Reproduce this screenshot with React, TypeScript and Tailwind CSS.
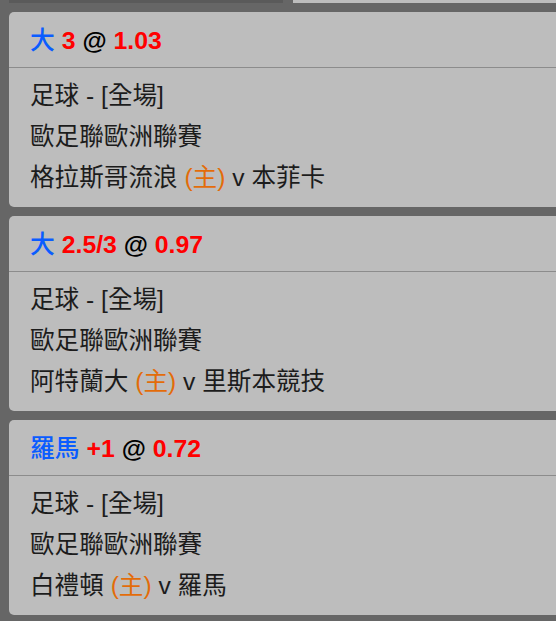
import React from "react";

interface Bet {
    pick: string;
    line: string;
    odds: string;
    home: string;
    away: string;
}

const bets: Bet[] = [
    { pick: "大", line: "3", odds: "1.03", home: "格拉斯哥流浪", away: "本菲卡" },
    { pick: "大", line: "2.5/3", odds: "0.97", home: "阿特蘭大", away: "里斯本競技" },
    { pick: "羅馬", line: "+1", odds: "0.72", home: "白禮頓", away: "羅馬" },
];

const font = {
    fontFamily: "'Liberation Sans', 'Noto Sans CJK TC', sans-serif",
};

function BetCard({ bet }: { bet: Bet }) {
    return (
        <div className="bg-[#bdbdbd] rounded-l-[5px]">
            {/* Header */}
            <div className="h-[56px] flex items-center pl-[21px] pt-[2px] border-b border-[#8c8c8c] text-[24.8px] font-bold">
                <span className="text-[#0a5cff] font-medium">{bet.pick}</span>
                <span className="text-[#ff0000]">&nbsp;{bet.line}</span>
                <span className="text-black">&nbsp;@&nbsp;</span>
                <span className="text-[#ff0000]">{bet.odds}</span>
            </div>
            {/* Match info */}
            <div className="pl-[21px] pt-[7px] pb-[9px] text-[24.6px] leading-[41px] text-[#1c1c1c]">
                <div>足球 - [全場]</div>
                <div>歐足聯歐洲聯賽</div>
                <div>
                    {bet.home} <span className="text-[#e36c09]">(主)</span> v {bet.away}
                </div>
            </div>
        </div>
    );
}

export default function App() {
    return (
        <div className="min-h-screen bg-[#666666] overflow-hidden" style={font}>
            {/* Top strip */}
            <div className="flex h-[3px]">
                <div className="w-[9px]" />
                <div className="w-[274px] bg-[#5a5a5a]" />
                <div className="w-[10px]" />
                <div className="flex-1 bg-[#bdbdbd]" />
            </div>
            <div className="flex flex-col gap-[9px] pt-[9px] pl-[9px]">
                {bets.map((bet, i) => (
                    <BetCard key={i} bet={bet} />
                ))}
            </div>
        </div>
    );
}
